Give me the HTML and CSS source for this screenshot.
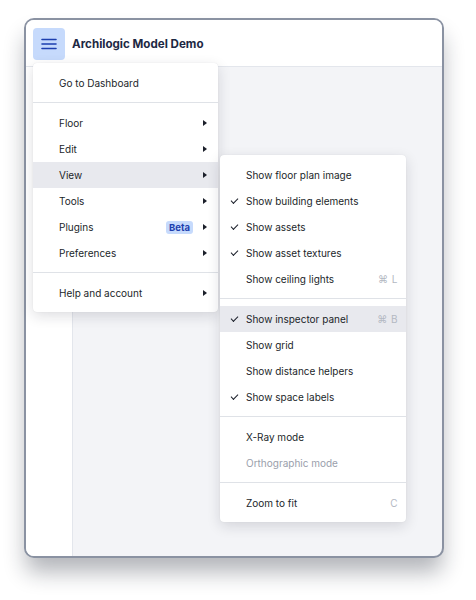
FILE: index.html
```html
<!DOCTYPE html>
<html>
<head>
<meta charset="utf-8">
<link rel="stylesheet" href="styles.css">
</head>
<body>
<div class="frame">
  <header class="topbar">
    <button class="burger" aria-label="Menu">
      <svg width="16" height="12" viewBox="0 0 16 12"><path d="M1 1.5h14M1 6h14M1 10.5h14" stroke="#1d3fae" stroke-width="1.6" stroke-linecap="round"/></svg>
    </button>
    <h1 class="title">Archilogic Model Demo</h1>
  </header>
  <div class="body">
    <aside class="sidebar"></aside>
    <main class="canvas"></main>
  </div>

  <div class="menu main-menu">
    <div class="item"><span class="label">Go to Dashboard</span></div>
    <div class="sep"></div>
    <div class="item"><span class="label">Floor</span><span class="arrow"></span></div>
    <div class="item"><span class="label">Edit</span><span class="arrow"></span></div>
    <div class="item active"><span class="label">View</span><span class="arrow"></span></div>
    <div class="item"><span class="label">Tools</span><span class="arrow"></span></div>
    <div class="item"><span class="label">Plugins</span><span class="badge">Beta</span><span class="arrow"></span></div>
    <div class="item"><span class="label">Preferences</span><span class="arrow"></span></div>
    <div class="sep"></div>
    <div class="item"><span class="label">Help and account</span><span class="arrow"></span></div>
  </div>

  <div class="menu sub-menu">
    <div class="item"><span class="check"></span><span class="label">Show floor plan image</span></div>
    <div class="item"><span class="check on"></span><span class="label">Show building elements</span></div>
    <div class="item"><span class="check on"></span><span class="label">Show assets</span></div>
    <div class="item"><span class="check on"></span><span class="label">Show asset textures</span></div>
    <div class="item"><span class="check"></span><span class="label">Show ceiling lights</span><span class="kbd">⌘ L</span></div>
    <div class="sep"></div>
    <div class="item active"><span class="check on"></span><span class="label">Show inspector panel</span><span class="kbd">⌘ B</span></div>
    <div class="item"><span class="check"></span><span class="label">Show grid</span></div>
    <div class="item"><span class="check"></span><span class="label">Show distance helpers</span></div>
    <div class="item"><span class="check on"></span><span class="label">Show space labels</span></div>
    <div class="sep"></div>
    <div class="item"><span class="check"></span><span class="label">X-Ray mode</span></div>
    <div class="item disabled"><span class="check"></span><span class="label">Orthographic mode</span></div>
    <div class="sep"></div>
    <div class="item"><span class="check"></span><span class="label">Zoom to fit</span><span class="kbd">C</span></div>
  </div>
</div>
</body>
</html>
```
FILE: styles.css
```css
* { box-sizing: border-box; }
html, body { margin: 0; background: #ffffff; }
body {
  min-height: 600px;
  padding: 18px 0 0 24px;
  font-family: Inter, "Noto Sans", sans-serif;
  color: #1b1f2a;
}
.frame {
  position: relative;
  width: 420px;
  height: 540px;
  border: 2px solid #8a92a2;
  border-radius: 10px;
  background: #f3f4f7;
  box-shadow: 0 16px 22px -2px rgba(20, 24, 40, 0.32);
  display: flex;
  flex-direction: column;
}
.topbar {
  height: 47px;
  flex: none;
  background: #ffffff;
  border-bottom: 1px solid #e3e6ec;
  border-radius: 8px 8px 0 0;
  display: flex;
  align-items: center;
  padding: 0 0 0 7px;
  gap: 7px;
}
.burger {
  width: 32px;
  height: 32px;
  border: none;
  border-radius: 4px;
  background: #c6dafc;
  display: flex;
  align-items: center;
  justify-content: center;
  padding: 0;
  margin-top: 2px;
}
.title {
  margin: 0;
  font-size: 11.6px;
  font-weight: 700;
  color: #1d2843;
  margin-top: 2px;
}
.body {
  flex: 1;
  display: flex;
  min-height: 0;
}
.sidebar {
  width: 47px;
  background: #ffffff;
  border-right: 1px solid #e3e6ec;
  border-radius: 0 0 0 8px;
}
.canvas { flex: 1; }

.menu {
  position: absolute;
  background: #ffffff;
  border-radius: 4px;
  box-shadow: 0 4px 14px rgba(20, 24, 40, 0.14), 0 0 1px rgba(20, 24, 40, 0.12);
  padding: 7px 0 6px;
  font-size: 10px;
}
.main-menu {
  left: 7px;
  top: 43px;
  width: 185px;
}
.sub-menu {
  left: 194px;
  top: 135px;
  width: 186px;
}
.item {
  height: 26px;
  display: flex;
  align-items: center;
  padding: 0 11px 0 26px;
  color: #1b1f2a;
}
.sub-menu .item { padding: 0 8px 0 8px; }
.item.active { background: #e8e9ee; }
.item.disabled { color: #9aa0ab; }
.label { flex: 1; white-space: nowrap; }
.sep {
  height: 1px;
  background: #dfe2e7;
  margin: 6px 0 7px;
}
.arrow {
  width: 0;
  height: 0;
  border-left: 4px solid #1b1f2a;
  border-top: 3px solid transparent;
  border-bottom: 3px solid transparent;
  margin-left: 10px;
}
.badge {
  background: #c6dafc;
  color: #1e3fae;
  font-weight: 700;
  font-size: 9.5px;
  padding: 1px 3px;
  border-radius: 3px;
  line-height: 11px;
}
.check {
  width: 18px;
  flex: none;
  display: flex;
  align-items: center;
}
.check.on::before {
  content: "";
  width: 6px;
  height: 3px;
  border-left: 1.3px solid #1b1f2a;
  border-bottom: 1.3px solid #1b1f2a;
  transform: rotate(-45deg);
  margin-left: 3px;
  margin-top: -2px;
}
.kbd {
  color: #b3b8c2;
  font-size: 10px;
  letter-spacing: 0.5px;
}
```
